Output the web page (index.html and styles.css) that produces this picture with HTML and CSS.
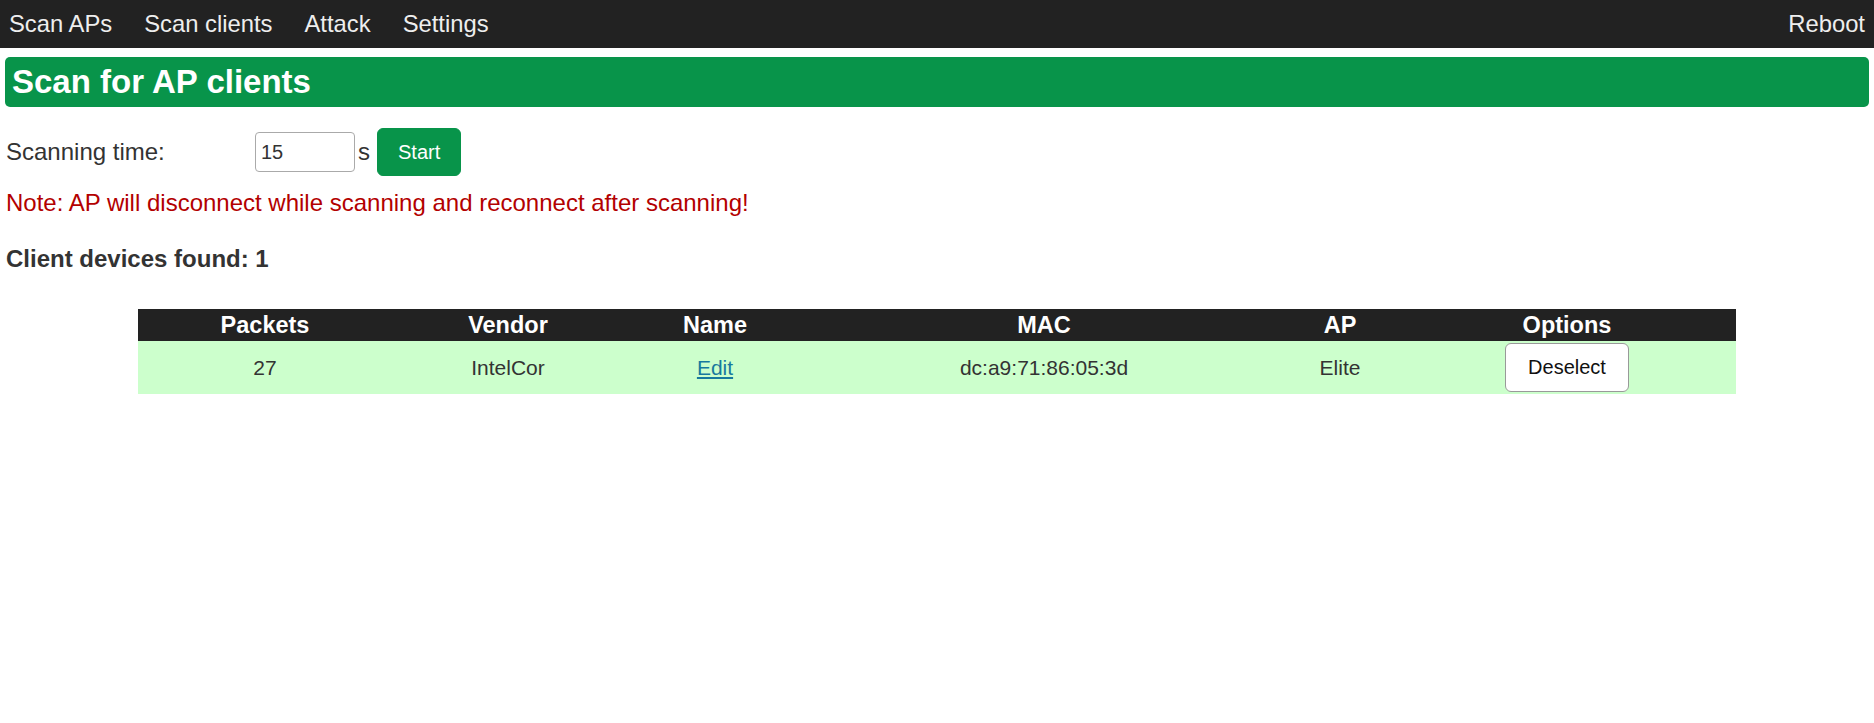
FILE: index.html
```html
<!DOCTYPE html>
<html>
<head>
<meta charset="utf-8">
<title>Scan clients</title>
<link rel="stylesheet" href="styles.css">
</head>
<body>
<nav class="topnav">
  <div class="nav-left">
    <a href="#">Scan APs</a>
    <a href="#">Scan clients</a>
    <a href="#">Attack</a>
    <a href="#">Settings</a>
  </div>
  <a href="#" class="nav-right">Reboot</a>
</nav>
<h1 class="page-title">Scan for AP clients</h1>
<main class="content">
  <div class="scan-row">
    <label class="scan-label" for="time">Scanning time:</label>
    <input id="time" class="time-input" type="text" value="15">
    <span class="unit">s</span>
    <button class="btn btn-green">Start</button>
  </div>
  <p class="note">Note: AP will disconnect while scanning and reconnect after scanning!</p>
  <p class="found">Client devices found: 1</p>
  <table class="clients">
    <colgroup>
      <col class="c1"><col class="c2"><col class="c3"><col class="c4"><col class="c5"><col class="c6">
    </colgroup>
    <thead>
      <tr><th>Packets</th><th>Vendor</th><th>Name</th><th>MAC</th><th>AP</th><th>Options</th></tr>
    </thead>
    <tbody>
      <tr class="selected">
        <td>27</td>
        <td>IntelCor</td>
        <td><a href="#" class="edit">Edit</a></td>
        <td>dc:a9:71:86:05:3d</td>
        <td>Elite</td>
        <td><button class="btn btn-white">Deselect</button></td>
      </tr>
    </tbody>
  </table>
</main>
</body>
</html>
```
FILE: styles.css
```css
html, body {
  margin: 0;
  padding: 0;
  background: #fff;
  font-family: "Liberation Sans", Arial, sans-serif;
  font-size: 24px;
  color: #333;
}

.topnav {
  display: flex;
  justify-content: space-between;
  align-items: center;
  height: 48px;
  background: #222;
  padding: 0 9px;
}

.nav-left {
  display: flex;
  gap: 32px;
}

.topnav a {
  color: #eee;
  text-decoration: none;
  font-size: 23.8px;
}

.page-title {
  margin: 9px 5px 0;
  height: 50px;
  line-height: 50px;
  padding: 0 7px;
  background: #08944a;
  color: #fff;
  font-size: 33px;
  font-weight: bold;
  border-radius: 5px;
}

.content {
  padding: 0 6px;
}

.scan-row {
  display: flex;
  align-items: center;
  margin-top: 21px;
}

.scan-label {
  width: 249px;
}

.time-input {
  box-sizing: border-box;
  width: 100px;
  height: 40px;
  border: 1px solid #aaa;
  border-radius: 4px;
  padding: 0 5px;
  font-family: "Liberation Sans", Arial, sans-serif;
  font-size: 20px;
  color: #333;
  margin: 0 3px 0 0;
}

.unit {
  margin-right: 7px;
}

.btn {
  box-sizing: border-box;
  height: 48px;
  padding: 0 20px;
  font-family: "Liberation Sans", Arial, sans-serif;
  font-size: 20px;
  border-radius: 6px;
  cursor: pointer;
}

.btn-green {
  background: #08944a;
  color: #fff;
  border: 1px solid #08944a;
}

.btn-white {
  height: 49px;
  padding: 0 22px;
  background: #fff;
  color: #111;
  border: 1px solid #999;
}

.note {
  margin: 13px 0 0;
  color: #b30000;
}

.found {
  margin: 28px 0 0;
  font-weight: bold;
}

.clients {
  width: 1598px;
  margin: 36px auto 0;
  border-collapse: collapse;
  table-layout: fixed;
  text-align: center;
}

.c1 { width: 254px; }
.c2 { width: 232px; }
.c3 { width: 182px; }
.c4 { width: 476px; }
.c5 { width: 116px; }
.c6 { width: 338px; }

.clients th {
  background: #222;
  color: #fff;
  font-weight: bold;
  font-size: 23.5px;
  height: 32px;
  padding: 0;
}

.clients td {
  height: 53px;
  padding: 0;
  font-size: 21px;
}

.selected {
  background: #ccffcc;
}

.edit {
  color: #17799e;
  text-decoration: underline;
}
```
